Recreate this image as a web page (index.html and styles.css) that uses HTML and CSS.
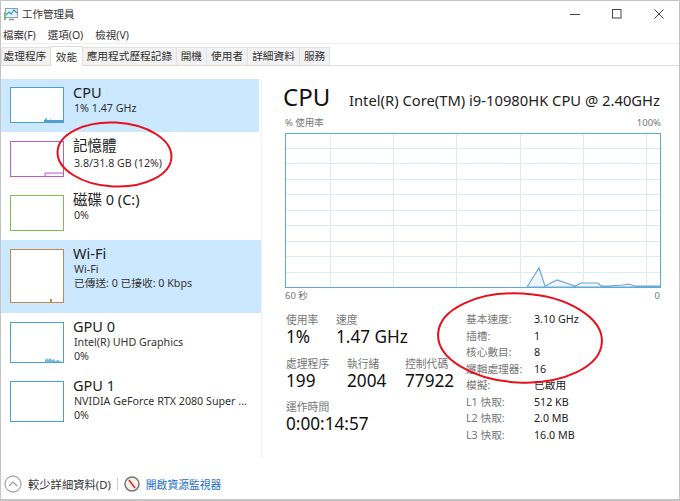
FILE: index.html
```html
<!DOCTYPE html>
<html lang="zh-Hant">
<head>
<meta charset="utf-8">
<title>工作管理員</title>
<link rel="stylesheet" href="styles.css">
</head>
<body>
<div class="window">
  <header class="titlebar">
    <svg class="appicon" width="15" height="14" viewBox="0 0 15 14"><rect x="1.5" y="1.5" width="12" height="9" fill="#e4f1f8" stroke="#8fa3ad"/><path d="M2 8l3-3 2 2 3-4 3 3" fill="none" stroke="#3b9bd0" stroke-width="1.2"/><path d="M5 12.5h5" stroke="#7f8f98" stroke-width="1.4"/><rect x="0" y="5" width="2" height="8" fill="#7db87d"/></svg>
    <span class="apptitle">工作管理員</span>
    <div class="winctrl">
      <svg width="10" height="10" viewBox="0 0 10 10"><path d="M0 5.500h10" stroke="#444"/></svg>
      <svg width="10" height="10" viewBox="0 0 10 10"><rect x=".5" y=".5" width="8.500" height="8.500" fill="none" stroke="#444"/></svg>
      <svg width="10" height="10" viewBox="0 0 10 10"><path d="M.5.5l9 9M9.500.5l-9 9" stroke="#444"/></svg>
    </div>
  </header>
  <nav class="menubar"><span>檔案(F)</span><span>選項(O)</span><span>檢視(V)</span></nav>
  <div class="tabs">
    <span class="tab">處理程序</span><span class="tab active">效能</span><span class="tab">應用程式歷程記錄</span><span class="tab">開機</span><span class="tab">使用者</span><span class="tab">詳細資料</span><span class="tab">服務</span>
  </div>
  <div class="content">
    <aside class="sidebar">
      <div class="item sel h-cpu">
        <svg class="thumb" width="54" height="36" viewBox="0 0 54 36"><rect x=".5" y=".5" width="53" height="35" fill="#fff" stroke="#4a9fd4"/><path d="M34 35v-2h1l1-3 1 3h3v-1l1 1h12v2z" fill="#4a9fd4"/></svg>
        <div class="info"><div class="name">CPU</div><div class="sub">1% 1.47 GHz</div></div>
      </div>
      <div class="item h-mem">
        <svg class="thumb" width="54" height="36" viewBox="0 0 54 36"><rect x=".5" y=".5" width="53" height="35" fill="#fff" stroke="#b95cc9"/><path d="M35 35v-3h18" fill="#f4e9f7" stroke="#b95cc9"/></svg>
        <div class="info"><div class="name">記憶體</div><div class="sub">3.8/31.8 GB (12%)</div></div>
      </div>
      <div class="item h-disk">
        <svg class="thumb" width="54" height="36" viewBox="0 0 54 36"><rect x=".5" y=".5" width="53" height="35" fill="#fff" stroke="#7cbf4f"/></svg>
        <div class="info"><div class="name">磁碟 0 (C:)</div><div class="sub">0%</div></div>
      </div>
      <div class="item sel h-wifi">
        <svg class="thumb" width="54" height="54" viewBox="0 0 54 54"><rect x=".5" y=".5" width="53" height="53" fill="#fff" stroke="#c08a55"/><path d="M40 54v-4h2v4z" fill="#c08a55"/></svg>
        <div class="info"><div class="name">Wi-Fi</div><div class="sub">Wi-Fi</div><div class="sub">已傳送: 0 已接收: 0 Kbps</div></div>
      </div>
      <div class="item h-gpu">
        <svg class="thumb" width="54" height="41" viewBox="0 0 54 41"><rect x=".5" y=".5" width="53" height="40" fill="#fff" stroke="#4a9fd4"/><path d="M35 40v-2l2-2 1 2 2-2 2 2 2-1 1 2 3-1 4 2z" fill="#7ab8e0"/></svg>
        <div class="info"><div class="name">GPU 0</div><div class="sub">Intel(R) UHD Graphics</div><div class="sub">0%</div></div>
      </div>
      <div class="item h-gpu">
        <svg class="thumb" width="54" height="41" viewBox="0 0 54 41"><rect x=".5" y=".5" width="53" height="40" fill="#fff" stroke="#4a9fd4"/></svg>
        <div class="info"><div class="name">GPU 1</div><div class="sub">NVIDIA GeForce RTX 2080 Super ...</div><div class="sub">0%</div></div>
      </div>
    </aside>
    <main class="panel">
      <div class="heading"><span class="bigname">CPU</span><span class="model">Intel(R) Core(TM) i9-10980HK CPU @ 2.40GHz</span></div>
      <div class="axis top"><span>% 使用率</span><span>100%</span></div>
      <svg class="graph" width="376" height="155" viewBox="0 0 376 155">
        <rect width="376" height="155" fill="#fff"/>
        <path d="M45.500 1v153M108.500 1v153M171.500 1v153M235.500 1v153M298.500 1v153M361.500 1v153M1 15.500h374M1 30.500h374M1 46.500h374M1 61.500h374M1 77.500h374M1 92.500h374M1 108.500h374M1 123.500h374M1 139.500h374" stroke="#dcebf6" fill="none"/>
        <path d="M242 154l12-19 6 18 12-6 18 6 6-3h17l3 3h7l15-1 5-1 7 2h25v1z" fill="#edf4fa" stroke="#6aaad6" stroke-width="1.200"/>
        <rect x=".5" y=".5" width="375" height="154" fill="none" stroke="#5fa8d8"/>
      </svg>
      <div class="axis bottom"><span>60 秒</span><span>0</span></div>
      <div class="stats">
        <div class="left">
          <div class="srow">
            <div class="stat w50"><div class="lbl">使用率</div><div class="val">1%</div></div>
            <div class="stat"><div class="lbl">速度</div><div class="val">1.47 GHz</div></div>
          </div>
          <div class="srow">
            <div class="stat w61"><div class="lbl">處理程序</div><div class="val">199</div></div>
            <div class="stat w58"><div class="lbl">執行緒</div><div class="val">2004</div></div>
            <div class="stat"><div class="lbl">控制代碼</div><div class="val">77922</div></div>
          </div>
          <div class="srow">
            <div class="stat"><div class="lbl">運作時間</div><div class="val">0:00:14:57</div></div>
          </div>
        </div>
        <dl class="specs">
          <dt>基本速度:</dt><dd>3.10 GHz</dd>
          <dt>插槽:</dt><dd>1</dd>
          <dt>核心數目:</dt><dd>8</dd>
          <dt>邏輯處理器:</dt><dd>16</dd>
          <dt>模擬:</dt><dd>已啟用</dd>
          <dt>L1 快取:</dt><dd>512 KB</dd>
          <dt>L2 快取:</dt><dd>2.0 MB</dd>
          <dt>L3 快取:</dt><dd>16.0 MB</dd>
        </dl>
      </div>
    </main>
  </div>
  <footer class="footer">
    <svg width="18" height="18" viewBox="0 0 18 18"><circle cx="9" cy="9" r="8" fill="#fff" stroke="#aaa" stroke-width="1.300"/><path d="M5 11l4-4 4 4" fill="none" stroke="#999" stroke-width="1.200"/></svg>
    <span class="less">較少詳細資料(D)</span>
    <span class="sep"></span>
    <svg width="16" height="16" viewBox="0 0 16 16"><circle cx="8" cy="8" r="7" fill="#f6f1e6" stroke="#777" stroke-width="1.500"/><path d="M5 4l6 8" stroke="#c8302a" stroke-width="1.500"/></svg>
    <span class="link">開啟資源監視器</span>
  </footer>
  <svg class="marks" width="680" height="501" viewBox="0 0 680 501">
    <ellipse cx="114.500" cy="154.500" rx="57" ry="32" transform="rotate(3 114.500 154.500)" fill="none" stroke="#e8101c" stroke-width="2"/>
    <ellipse cx="520" cy="338" rx="82" ry="44.500" transform="rotate(3 520 338)" fill="none" stroke="#e8101c" stroke-width="2"/>
  </svg>
</div>
</body>
</html>
```
FILE: styles.css
```css
* { box-sizing: border-box; margin: 0; padding: 0; }
html, body { width: 680px; height: 501px; overflow: hidden; background: #fff; }
body { font-family: "Noto Sans", "Noto Sans CJK TC", sans-serif; color: #222; }
.window { position: relative; width: 680px; height: 501px; border: 1px solid #c4c4c4; border-bottom: 2px solid #c4c4c4; display: flex; flex-direction: column; background: #fff; }

.titlebar { height: 25px; display: flex; align-items: center; padding-left: 3px; flex: none; }
.appicon { margin-right: 3px; }
.apptitle { font-size: 10.500px; color: #333; }
.winctrl { margin-left: auto; display: flex; gap: 32px; padding-right: 15px; align-items: center; }

.menubar { height: 18px; flex: none; display: flex; gap: 12px; padding-left: 2px; font-size: 10.500px; line-height: 18px; border-bottom: 1px solid #eee; color: #333; }

.tabs { height: 22px; flex: none; display: flex; align-items: flex-end; border-bottom: 1px solid #dcdcdc; }
.tab { height: 18px; line-height: 17px; font-size: 10.700px; padding: 0 3.500px; background: #f2f2f2; border: 1px solid #e2e2e2; border-bottom: none; margin-right: -1px; color: #333; white-space: nowrap; }
.tab:first-child { padding-left: 1.500px; }
.tab:nth-child(n+4) { padding: 0 4px; }
.tab.active { height: 20px; line-height: 20px; background: #fff; padding: 0 5px; margin-bottom: -1px; border-color: #dcdcdc; }

.content { flex: 1; display: flex; min-height: 0; padding-top: 13px; }
.sidebar { width: 261px; flex: none; border-right: 1px solid #f1f1f1; margin-right: 23px; height: 379px; display: flex; flex-direction: column; }
.item { display: flex; padding-left: 9px; gap: 9px; }
.item.sel { background: #cce8ff; }
.h-cpu { height: 53px; padding-top: 8px; margin-right: 2px; }
.h-mem, .h-disk { height: 54px; padding-top: 9px; }
.h-wifi { height: 73px; padding-top: 9px; }
.h-gpu { height: 59px; padding-top: 9px; }
.thumb { flex: none; display: block; }
.name { font-size: 14.500px; line-height: 17px; margin-top: -4px; color: #222; }
.h-cpu .name { margin-top: -3px; }
.h-mem .sub { margin-top: 2px; }
.sub { font-size: 10.700px; line-height: 14px; color: #333; white-space: nowrap; margin-left: 1px; }

.panel { flex: 1; padding-right: 19px; min-width: 0; }
.heading { display: flex; align-items: baseline; height: 40px; margin-top: -2px; }
.bigname { font-size: 24px; line-height: 40px; width: 66px; margin-left: -2px; color: #111; }
.model { font-size: 14.750px; color: #222; white-space: nowrap; }
.axis { display: flex; justify-content: space-between; font-size: 9.500px; color: #777; line-height: 12px; width: 376px; }
.axis.top { height: 12px; margin-bottom: 4px; }
.axis.bottom { margin-top: 2px; height: 12px; padding-right: 1px; }
.graph { display: block; }

.stats { display: flex; margin-top: 11px; }
.left { width: 181px; flex: none; padding-left: 1px; }
.srow { display: flex; height: 43.500px; }
.stat { flex: none; }
.w50 { width: 50px; }
.w61 { width: 61px; }
.w58 { width: 58px; }
.lbl { font-size: 10.800px; line-height: 13px; color: #777; white-space: nowrap; }
.val { font-size: 17.200px; line-height: 21.500px; color: #111; white-space: nowrap; }
.specs { display: grid; grid-template-columns: 68px auto; grid-auto-rows: 16.500px; font-size: 10.700px; line-height: 16.500px; align-content: start; margin-top: -2px; }
.specs dt { color: #777; white-space: nowrap; }
.specs dd { color: #222; white-space: nowrap; }

.footer { height: 28px; flex: none; margin-top: auto; display: flex; align-items: center; padding-left: 3px; font-size: 10.800px; margin-bottom: 1px; }
.less { margin-left: 6px; font-size: 11.300px; color: #333; }
.sep { width: 1px; height: 12px; background: #d0d0d0; margin: 0 6px; }
.link { margin-left: 6px; color: #1e70c8; }

.marks { position: absolute; left: -1px; top: -1px; pointer-events: none; }
```
